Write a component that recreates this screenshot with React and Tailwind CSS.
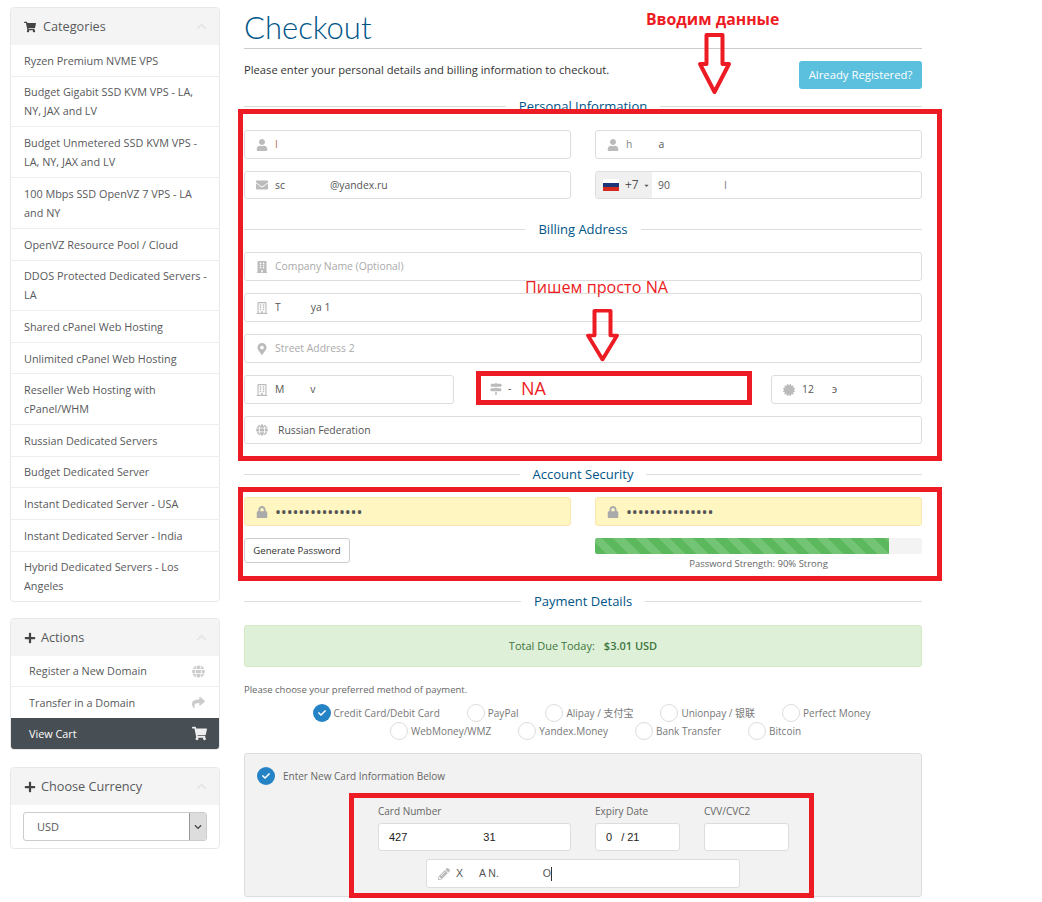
import React from 'react';
import {
    FaShoppingCart, FaPlus, FaChevronUp, FaGlobe, FaShare, FaUser, FaEnvelope, FaBuilding,
    FaRegBuilding, FaMapMarkerAlt, FaMapSigns, FaCertificate, FaLock, FaPencilAlt, FaCheck,
    FaCaretDown, FaChevronDown,
} from 'react-icons/fa';

const categories = [
    'Ryzen Premium NVME VPS',
    'Budget Gigabit SSD KVM VPS - LA, NY, JAX and LV',
    'Budget Unmetered SSD KVM VPS - LA, NY, JAX and LV',
    '100 Mbps SSD OpenVZ 7 VPS - LA and NY',
    'OpenVZ Resource Pool / Cloud',
    'DDOS Protected Dedicated Servers - LA',
    'Shared cPanel Web Hosting',
    'Unlimited cPanel Web Hosting',
    'Reseller Web Hosting with cPanel/WHM',
    'Russian Dedicated Servers',
    'Budget Dedicated Server',
    'Instant Dedicated Server - USA',
    'Instant Dedicated Server - India',
    'Hybrid Dedicated Servers - Los Angeles',
];

const PanelHeader = ({ icon: Icon, title, gap }) => (
    <div className={`flex items-center h-[37px] pl-[13px] pr-3 bg-[#f4f4f4] text-[12.7px] text-[#58595b] ${gap}`}>
        <Icon className="text-[12px] text-[#444]" />
        <span className="flex-1">{title}</span>
        <FaChevronUp className="text-[11px] text-[#e6e6e6]" />
    </div>
);

const SectionTitle = ({ children, className = '' }) => (
    <div className={`flex items-center gap-[13px] text-[13px] leading-[18px] text-[#058] ${className}`}>
        <div className="flex-1 h-px bg-[#ddd]" />
        <span>{children}</span>
        <div className="flex-1 h-px bg-[#ddd]" />
    </div>
);

const Field = ({ icon: Icon, children, className = '', tall = false, muted = false }) => (
    <div className={`flex items-center ${tall ? 'h-[29px]' : 'h-[28px]'} pl-[11px] border border-[#ddd] rounded-[3px] bg-white text-[10.4px] ${muted ? 'text-[#aaa]' : 'text-[#555]'} ${className}`}>
        <span className="w-[19px] shrink-0 text-[12px] text-[#bbb]"><Icon /></span>
        <span className="pt-px">{children}</span>
    </div>
);

const Radio = ({ label, checked, className = '' }) => (
    <span className={`inline-flex items-center gap-[3px] ${className}`}>
        {checked ? (
            <span className="w-[18px] h-[18px] rounded-full bg-[#2483c5] flex items-center justify-center">
                <FaCheck className="text-[8px] text-white" />
            </span>
        ) : (
            <span className="w-[18px] h-[18px] rounded-full border border-[#ddd] bg-white" />
        )}
        <span>{label}</span>
    </span>
);

const Arrow = ({ className }) => (
    <svg className={`absolute ${className}`} viewBox="0 0 35 62" fill="none" preserveAspectRatio="none">
        <path d="M9.5 2H25.5V31H32L17.5 59L3 31H9.5Z" stroke="#ed1c24" strokeWidth="4" strokeLinejoin="round" />
    </svg>
);

const Sidebar = () => (
    <aside className="w-[210px] shrink-0 mt-[7px] text-[10.85px] text-[#58595b]">
        <div className="border border-[#e8e8e8] rounded-[4px] overflow-hidden">
            <PanelHeader icon={FaShoppingCart} title="Categories" gap="gap-[7px]" />
            {categories.map((c) => (
                <div key={c} className="pl-[13px] pr-[12px] py-[5.7px] leading-[19.2px] border-b border-[#eee] last:border-b-0">{c}</div>
            ))}
        </div>

        <div className="mt-[16px] border border-[#e8e8e8] rounded-[4px] overflow-hidden">
            <PanelHeader icon={FaPlus} title="Actions" gap="gap-[5px]" />
            <div className="flex items-center justify-between h-[31px] pl-[18px] pr-[14px] border-b border-[#eee]">
                Register a New Domain <FaGlobe className="text-[13px] text-[#ccc]" />
            </div>
            <div className="flex items-center justify-between h-[31px] pl-[18px] pr-[14px]">
                Transfer in a Domain <FaShare className="text-[13px] text-[#ccc]" />
            </div>
            <div className="flex items-center justify-between h-[31px] pl-[18px] pr-[12px] bg-[#474e54] text-white">
                View Cart <FaShoppingCart className="text-[15px] text-[#eee]" />
            </div>
        </div>

        <div className="mt-[17px] border border-[#e8e8e8] rounded-[4px] overflow-hidden">
            <PanelHeader icon={FaPlus} title="Choose Currency" gap="gap-[5px]" />
            <div className="px-3 pt-[7px] pb-[7px]">
                <div className="flex h-[29px] border border-[#ccc] rounded-[3px] overflow-hidden text-[11px]">
                    <span className="flex-1 flex items-center pl-[13px]">USD</span>
                    <span className="w-[17px] flex items-center justify-center bg-[#ddd] border-l border-[#999] text-[#444]">
                        <FaChevronDown className="text-[8px]" />
                    </span>
                </div>
            </div>
        </div>
    </aside>
);

const Main = () => (
    <main className="w-[678px] ml-[24px] text-[#333]">
        <h1 className="mt-[8px] h-[41px] border-b border-[#ccc] font-['Lato'] font-light text-[31px] leading-[38px] text-[#058]">Checkout</h1>

        <div className="flex justify-between mt-[12px]">
            <p className="text-[11.2px] leading-[17px] text-[#333]">Please enter your personal details and billing information to checkout.</p>
            <button className="w-[123px] h-[28px] bg-[#5bc0de] rounded-[3px] text-[11.3px] text-white">Already Registered?</button>
        </div>

        <SectionTitle className="mt-[8px]">Personal Information</SectionTitle>

        <div className="grid grid-cols-2 gap-x-[24px] gap-y-[12px] mt-[15px]">
            <Field icon={FaUser} tall><span className="text-[#a75]">I</span></Field>
            <Field icon={FaUser} tall><span className="text-[#888]">h</span><span className="ml-[26px]">a</span></Field>
            <Field icon={FaEnvelope}>sc<span className="ml-[45px]">@yandex.ru</span></Field>
            <div className="flex h-[28px] border border-[#ddd] rounded-[3px] text-[11px] text-[#555] overflow-hidden">
                <div className="flex items-center w-[56px] pl-[7px] bg-[#f0f0f0] text-[12px]">
                    <span className="w-[16px] h-[12px] flex flex-col shrink-0">
                        <span className="flex-1 bg-white" />
                        <span className="flex-1 bg-[#1c3578]" />
                        <span className="flex-1 bg-[#d52b1e]" />
                    </span>
                    <span className="ml-[6px]">+7</span>
                    <FaCaretDown className="ml-[4px] text-[7px]" />
                </div>
                <div className="flex items-center pl-[6px] pt-px text-[10.4px]">90<span className="ml-[54px] text-[#778]">I</span></div>
            </div>
        </div>

        <SectionTitle className="mt-[21px]">Billing Address</SectionTitle>

        <div className="flex flex-col gap-[12px] mt-[14px]">
            <Field icon={FaBuilding} tall muted>Company Name (Optional)</Field>
            <Field icon={FaRegBuilding} tall>T<span className="ml-[30px]">ya 1</span></Field>
            <Field icon={FaMapMarkerAlt} tall muted>Street Address 2</Field>
            <div className="flex justify-between">
                <Field icon={FaRegBuilding} tall className="w-[210px]">M<span className="ml-[26px]">v</span></Field>
                <Field icon={FaMapSigns} tall className="w-[270px] ml-[26px]">-</Field>
                <Field icon={FaCertificate} tall className="w-[151px] ml-auto">12<span className="ml-[18px]">э</span></Field>
            </div>
            <Field icon={FaGlobe}><span className="ml-[3px]">Russian Federation</span></Field>
        </div>

        <SectionTitle className="mt-[21px]">Account Security</SectionTitle>

        <div className="grid grid-cols-2 gap-x-[24px] mt-[14px]">
            {[0, 1].map((i) => (
                <div key={i} className="flex items-center h-[29px] pl-[11px] bg-[#fff6c2] border border-[#fbe6b0] rounded-[3px]">
                    <FaLock className="text-[12px] text-[#aaa]" />
                    <span className="ml-[7px] text-[16px] tracking-[-0.2px] text-[#555]">•••••••••••••••</span>
                </div>
            ))}
            <div className="mt-[12px]">
                <button className="block w-[106px] h-[25px] pt-px bg-white border border-[#ccc] rounded-[3px] text-[9.6px] text-[#333]">Generate Password</button>
            </div>
            <div className="mt-[12px]">
                <div className="h-[16px] bg-[#f3f3f3] rounded-[3px] overflow-hidden">
                    <div className="h-full w-[90%] bg-[#5cb85c] bg-[repeating-linear-gradient(45deg,#5cb85c_0,#5cb85c_8px,#74c476_8px,#74c476_16px)]" />
                </div>
                <p className="mt-[3px] text-center text-[9.5px] leading-[14px] text-[#666]">Password Strength: 90% Strong</p>
            </div>
        </div>

        <SectionTitle className="mt-[21px]">Payment Details</SectionTitle>

        <div className="flex items-center justify-center h-[42px] mt-[15px] bg-[#dff0d8] border border-[#d6e9c6] rounded-[3px] text-[11px] text-[#3c763d]">
            Total Due Today:<strong className="ml-[9px] font-semibold">$3.01 USD</strong>
        </div>

        <p className="mt-[16px] text-[9.5px] leading-[14px] text-[#666]">Please choose your preferred method of payment.</p>

        <div className="flex flex-col items-center mt-[7px] pl-[17px] text-[10px] leading-[18px] text-[#777] font-['Open_Sans','Noto_Sans_CJK_SC',sans-serif]">
            <div className="flex gap-[27px]">
                <Radio checked label="Credit Card/Debit Card" />
                <Radio label="PayPal" />
                <Radio label="Alipay / 支付宝" />
                <Radio label="Unionpay / 银联" />
                <Radio label="Perfect Money" />
            </div>
            <div className="flex gap-[27px] pl-[8px]">
                <Radio label="WebMoney/WMZ" />
                <Radio label="Yandex.Money" />
                <Radio label="Bank Transfer" />
                <Radio label="Bitcoin" />
            </div>
        </div>

        <div className="h-[144px] mt-[13px] bg-[#f2f2f2] border border-[#ddd] rounded-[3px]">
            <div className="flex items-center gap-[8px] pl-[12px] pt-[13px] text-[10px] text-[#666]">
                <span className="w-[18px] h-[18px] rounded-full bg-[#2483c5] flex items-center justify-center">
                    <FaCheck className="text-[8px] text-white" />
                </span>
                Enter New Card Information Below
            </div>
            <div className="flex gap-[24px] mt-[20px] ml-[133px] text-[10px] leading-[13px] text-[#666]">
                <div className="w-[193px]">
                    Card Number
                    <div className="flex items-center h-[28px] mt-[5px] pl-[10px] bg-white border border-[#ddd] rounded-[3px] font-['Liberation_Sans'] text-[11px] text-[#222]">427<span className="ml-[76px]">31</span></div>
                </div>
                <div className="w-[85px]">
                    Expiry Date
                    <div className="flex items-center h-[28px] mt-[5px] pl-[10px] bg-white border border-[#ddd] rounded-[3px] font-['Liberation_Sans'] text-[11px] text-[#222]">0<span className="ml-[9px]">/ 21</span></div>
                </div>
                <div className="w-[85px]">
                    CVV/CVC2
                    <div className="h-[28px] mt-[5px] bg-white border border-[#ddd] rounded-[3px]" />
                </div>
            </div>
            <div className="flex items-center w-[314px] h-[29px] mt-[8px] ml-[181px] pl-[11px] bg-white border border-[#ddd] rounded-[3px] font-['Liberation_Sans'] text-[10.5px] text-[#555]">
                <FaPencilAlt className="text-[12px] text-[#bbb]" />
                <span className="ml-[6px]">X</span>
                <span className="ml-[16px]">A N.</span>
                <span className="ml-[44px]">O</span>
                <span className="w-px h-[14px] bg-[#333]" />
            </div>
        </div>
    </main>
);

// red marks drawn over the screenshot
const Annotations = () => (
    <>
        <div className="absolute left-[238px] top-[109px] w-[704px] h-[352px] border-[5px] border-[#ed1c24]" />
        <div className="absolute left-[238px] top-[487px] w-[704px] h-[94px] border-[5px] border-[#ed1c24]" />
        <div className="absolute left-[349px] top-[793px] w-[465px] h-[105px] border-[5px] border-[#ed1c24]" />
        <div className="absolute left-[476px] top-[371px] w-[276px] h-[34px] border-[5px] border-[#ed1c24] bg-white" />
        <span className="absolute left-[646px] top-[8px] text-[15.8px] leading-[22px] font-bold text-[#ed1c24]">Вводим данные</span>
        <span className="absolute left-[525px] top-[276px] text-[16.2px] leading-[22px] text-[#ed1c24]">Пишем просто NA</span>
        <span className="absolute left-[521px] top-[377px] text-[18px] leading-[22px] text-[#ed1c24]">NA</span>
        <span className="absolute left-[490px] top-[383px] text-[12px] text-[#bbb]"><FaMapSigns /></span>
        <span className="absolute left-[508px] top-[381px] text-[10.5px] text-[#555]">-</span>
        <Arrow className="left-[697px] top-[33px] w-[35px] h-[62px]" />
        <Arrow className="left-[585px] top-[309px] w-[35px] h-[53px]" />
    </>
);

const App = () => (
    <div className="relative flex w-[1042px] h-[902px] overflow-hidden pl-[10px] bg-white font-['Open_Sans',sans-serif]">
        <Sidebar />
        <Main />
        <Annotations />
    </div>
);

export default App;
